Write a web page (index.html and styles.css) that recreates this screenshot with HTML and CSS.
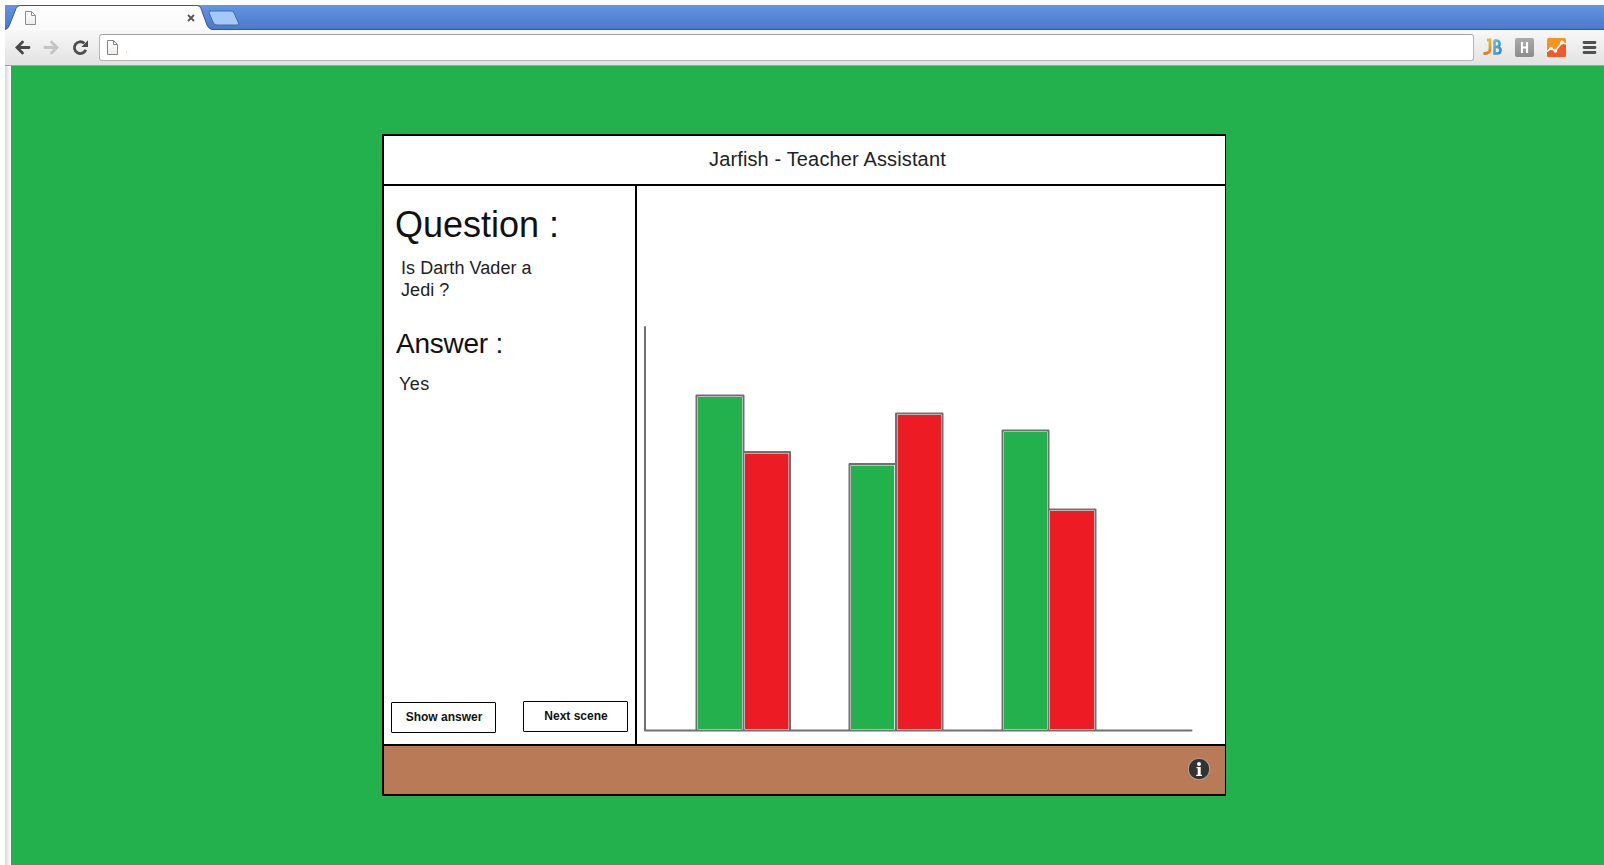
FILE: index.html
```html
<!DOCTYPE html>
<html lang="en">
<head>
<meta charset="utf-8">
<title>Jarfish - Teacher Assistant</title>
<link rel="stylesheet" href="styles.css">
</head>
<body>
<div class="browser">
  <div class="tabs">
    <svg class="tabs-art" width="240" height="25" viewBox="5 5 240 25">
      <defs>
        <linearGradient id="tab" x1="0" y1="0" x2="0" y2="1"><stop offset="0" stop-color="#fff"/><stop offset="1" stop-color="#f9f9f9"/></linearGradient>
        <linearGradient id="page" x1="0" y1="0" x2="0" y2="1"><stop offset="0" stop-color="#fff"/><stop offset="1" stop-color="#ececec"/></linearGradient>
      </defs>
      <path d="M5 30 Q8 29 9.500 25 L16 8.500 Q17.500 5.500 20 5.500 H197 Q200 5.500 201 8.500 L207 25 Q209 30 214 30Z" fill="url(#tab)"/>
      <path d="M5 29.500 Q8 29 9.500 25 L16 8.500 Q17.500 5.500 20 5.500 H197 Q200 5.500 201 8.500 L207 25 Q209 29.500 214 29.500 H245" fill="none" stroke="#34569a" stroke-width="1"/>
      <path d="M211 11 H231 Q233 11 234 13 L238.500 23 Q239.500 25 237 25 H217 Q214.500 25 213.500 23 L209 13 Q208.200 11 211 11Z" fill="#a4c8f8" stroke="#426bb5"/>
      <path d="M25.500 11.500 H31.500 L35.500 15.500 V24.500 H25.500Z M31.500 11.500 V15.500 H35.500" fill="url(#page)" stroke="#8d8d8d"/>
      <path d="M188 15 L194 21 M194 15 L188 21" stroke="#555" stroke-width="1.800"/>
    </svg>
  </div>
  <div class="toolbar">
    <svg class="nav" width="90" height="35" viewBox="5 30 90 35">
      <path d="M29 47.500 H17.500 M22.500 42 L17 47.500 L22.500 53" fill="none" stroke="#484848" stroke-width="2.800" stroke-linecap="round"/>
      <path d="M45 47.500 H56.500 M51.500 42 L57 47.500 L51.500 53" fill="none" stroke="#c4c4c4" stroke-width="2.800" stroke-linecap="round"/>
      <path d="M84.300 43.300 A5.900 5.900 0 1 0 85.800 49.800" fill="none" stroke="#4c4c4c" stroke-width="2.800"/>
      <path d="M88 40.300 V47 H81.300Z" fill="#4c4c4c"/>
    </svg>
    <div class="address">
      <svg width="30" height="25" viewBox="100 35 30 25">
        <path d="M107.500 40.500 H113.500 L117.500 44.500 V54.500 H107.500Z M113.500 40.500 V44.500 H117.500" fill="url(#page)" stroke="#858585"/>
        <path d="M126 52h1v1h-1z" fill="#dfb090"/>
      </svg>
    </div>
    <svg class="extensions" width="130" height="35" viewBox="1474 30 130 35">
      <defs>
        <linearGradient id="gold" x1="0" y1="0" x2="0" y2="1"><stop offset="0" stop-color="#efb52b"/><stop offset="1" stop-color="#dd8022"/></linearGradient>
        <linearGradient id="blue" x1="0" y1="0" x2="1" y2="1"><stop offset="0" stop-color="#62c0dd"/><stop offset="1" stop-color="#3c87bd"/></linearGradient>
        <linearGradient id="grey" x1="0" y1="0" x2="0" y2="1"><stop offset="0" stop-color="#aaa"/><stop offset="1" stop-color="#8c8c8c"/></linearGradient>
      </defs>
      <path d="M1487 40 H1490 V49 Q1490 53.700 1483.500 53.500" fill="none" stroke="url(#gold)" stroke-width="2.800"/>
      <path d="M1494.500 40.500 V53.500 H1497 Q1500.500 53.500 1500.500 50.200 Q1500.500 47 1497 47 H1494.500 M1496 47 Q1499.500 47 1499.500 43.700 Q1499.500 40.500 1496 40.500 H1494" fill="none" stroke="url(#blue)" stroke-width="2.700"/>
      <rect x="1515" y="38" width="19" height="19" rx="2" fill="url(#grey)"/>
      <path d="M1522 42 V53 M1527 42 V53 M1522 47.500 H1527" stroke="#fff" stroke-width="2.200"/>
      <rect x="1547" y="38" width="19" height="19" rx="1.500" fill="#f79420"/>
      <path d="M1547 51.500 L1551 48.500 L1555.500 51 L1562 42.500 L1566 44 V55.500 Q1566 57 1564.500 57 H1548.500 Q1547 57 1547 55.500Z" fill="#f1592a"/>
      <path d="M1547 51.500 L1551 48.500 L1555.500 51 L1562 42.500 L1566 44" fill="none" stroke="#fff" stroke-width="1.500"/>
      <circle cx="1551" cy="48.500" r="1.800" fill="#fff"/><circle cx="1555.500" cy="51" r="1.800" fill="#fff"/><circle cx="1562" cy="42.500" r="1.900" fill="#fff"/>
      <path d="M1584 42.500 H1595 M1584 47.500 H1595 M1584 52.500 H1595" stroke="#505050" stroke-width="2.800" stroke-linecap="round"/>
    </svg>
  </div>
  <main class="page">
    <section class="panel">
      <header class="title">Jarfish - Teacher Assistant</header>
      <div class="content">
        <aside class="sidebar">
          <h1 class="question-heading">Question :</h1>
          <p class="question">Is Darth Vader a<br>Jedi ?</p>
          <h2 class="answer-heading">Answer :</h2>
          <p class="answer">Yes</p>
          <div class="actions">
            <button class="button show">Show answer</button>
            <button class="button next">Next scene</button>
          </div>
        </aside>
        <svg class="chart" width="588" height="558" viewBox="637 186 588 558">
          <g id="bars" stroke="#fff" stroke-width="3">
            <path d="M696.500 395.500 H743.500 V730.500 H696.500Z" fill="#22b14c"/>
            <path d="M743.500 452 H790 V730.500 H743.500Z" fill="#ed1c24"/>
            <path d="M849.500 464 H896 V730.500 H849.500Z" fill="#22b14c"/>
            <path d="M896 413.500 H942.500 V730.500 H896Z" fill="#ed1c24"/>
            <path d="M1002.500 430.500 H1048.500 V730.500 H1002.500Z" fill="#22b14c"/>
            <path d="M1048.500 509.500 H1095.500 V730.500 H1048.500Z" fill="#ed1c24"/>
          </g>
          <path d="M645 327 V730.500 H1191.500 M696.500 730.500 V395.500 H743.500 V730.500 M743.500 452 H790 V730.500 M849.500 730.500 V464 H896 M896 730.500 V413.500 H942.500 V730.500 M1002.500 730.500 V430.500 H1048.500 V730.500 M1048.500 509.500 H1095.500 V730.500" fill="none" stroke="#707070" stroke-width="2" stroke-linecap="round" stroke-linejoin="round"/>
        </svg>
      </div>
      <footer class="footer">
        <svg width="22" height="22" viewBox="0 0 22 22">
          <circle cx="11" cy="11" r="10.700" fill="#333" stroke="#ddd" stroke-width=".6"/>
          <circle cx="11" cy="6" r="2" fill="#fff"/>
          <path d="M8.500 9 H12.700 V16.700 H14 V18 H8.200 V16.700 H9.700 V10.300 H8.500Z" fill="#fff"/>
        </svg>
      </footer>
    </section>
  </main>
</div>
</body>
</html>
```
FILE: styles.css
```css
* { box-sizing: border-box; }
body { margin: 0; background: #fff; font-family: "Liberation Sans", Arial, sans-serif; color: #111; overflow: hidden; }
.browser { height: 865px; padding: 5px 0 0 5px; display: flex; flex-direction: column; }
.tabs { height: 25px; background: linear-gradient(#6495df, #4a78cc); border-bottom: 1px solid #34569a; }
.tabs-art { display: block; }
.toolbar { height: 36px; display: flex; background: linear-gradient(#f8f8f8, #e2e2e2); border-bottom: 1px solid #a2a2a2; }
.nav, .extensions { display: block; flex: none; }
.nav { margin-right: 4px; }
.address { flex: 1; height: 27px; margin-top: 4px; border: 1px solid #b5b5b5; border-top-color: #a0a0a0; border-radius: 3px; background: #fff; }
.address svg { display: block; }
.page { flex: 1; padding: 68px 0 0 377px; background: linear-gradient(to right, #d9d9d9, #fff 6px, #22b14c 6px); }
.panel { width: 844px; height: 662px; border: 2px solid #000; border-right-width: 1px; background: #fff; display: flex; flex-direction: column; }
.title { height: 50px; border-bottom: 2px solid #000; padding-left: 325px; font-size: 20px; line-height: 47px; letter-spacing: .14px; color: #222; white-space: nowrap; }
.content { height: 558px; display: flex; }
.sidebar { width: 253px; border-right: 2px solid #000; display: flex; flex-direction: column; }
.sidebar h1, .sidebar h2, .sidebar p { margin: 0; font-weight: 400; white-space: nowrap; }
.sidebar .question-heading { margin: 18px 0 0 11px; font-size: 36px; line-height: 42px; }
.sidebar .question { margin: 11px 0 0 17px; font-size: 18px; line-height: 22px; letter-spacing: .06px; color: #222; }
.sidebar .answer-heading { margin: 27px 0 0 12px; font-size: 28px; line-height: 32px; letter-spacing: -.25px; }
.sidebar .answer { margin: 13px 0 0 15px; font-size: 18px; line-height: 22px; letter-spacing: .5px; color: #222; }
.actions { display: flex; gap: 27px; margin: auto 7px 11px; }
.button { width: 105px; height: 31px; padding: 0 0 2px 1px; border: 1px solid #000; border-radius: 1px; background: #fff; color: #111; font: bold 12px "Liberation Sans", Arial, sans-serif; }
.show { margin-top: 1px; }
.next { margin-bottom: 1px; }
.chart { display: block; }
.footer { flex: 1; border-top: 2px solid #000; background: #b97a57; display: flex; justify-content: flex-end; padding: 12px 15px 0 0; }
.footer svg { display: block; }
```
